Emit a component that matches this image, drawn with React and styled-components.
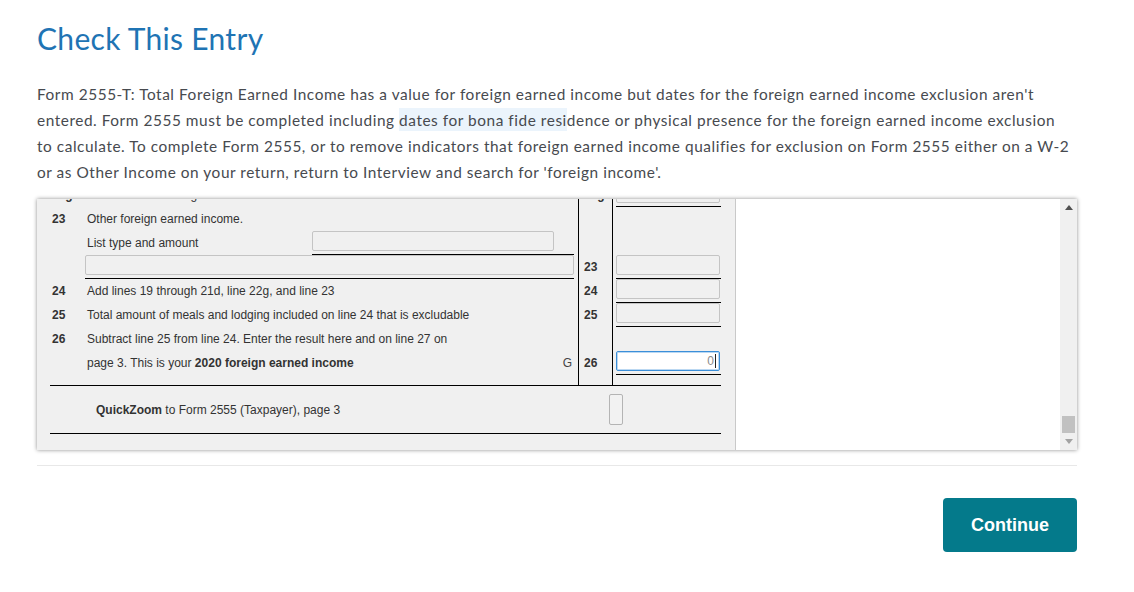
import React from "react";
import styled, { createGlobalStyle } from "styled-components";

const GlobalStyle = createGlobalStyle`
    body {
        margin: 0;
        background: #ffffff;
    }
`;

const Page = styled.div`
    width: 1040px;
    padding: 18px 0 0 37px;
    font-family: Lato, "Open Sans", sans-serif;
`;

const Title = styled.h1`
    margin: 0;
    font-size: 30px;
    line-height: 40px;
    font-weight: 400;
    letter-spacing: 0.3px;
    color: #1f74b4;
`;

const Intro = styled.p`
    margin: 23px 0 0 0;
    font-size: 15.4px;
    line-height: 26px;
    letter-spacing: 0.55px;
    color: #474a4f;
    white-space: nowrap;
`;

const Highlight = styled.span`
    background: #ebf4fc;
    padding: 3px 0 2px;
`;

const Frame = styled.div`
    margin-top: 14px;
    height: 251px;
    display: flex;
    box-shadow: 0 0 4px rgba(0, 0, 0, 0.45);
    overflow: hidden;
`;

const FormPane = styled.div`
    width: 698px;
    background: #f0f0f0;
    border-right: 1px solid #c9c9c9;
    overflow: hidden;
    font-family: "Liberation Sans", Arial, sans-serif;
    font-size: 12px;
    color: #333333;
`;

/* the pane is scrolled down a little: the previous line peeks out at the top */
const Sheet = styled.div`
    margin-top: -16px;
`;

const Grid = styled.div`
    display: grid;
    grid-template-columns: 541px 35px 122px;
    grid-auto-rows: 24px;
`;

const LeftCell = styled.div`
    display: flex;
    align-items: ${({ $top }) => ($top ? "flex-start" : "center")};
    padding-left: 15px;
    padding-right: 4px;
`;

const LineNo = styled.b`
    width: 35px;
    flex: none;
`;

const Label = styled.span`
    flex: 1;
    b {
        font-weight: 700;
    }
`;

const Letter = styled.span`
    margin-right: 2px;
    color: #444;
`;

const MidCell = styled.div`
    border-left: 1px solid #000;
    border-right: 1px solid #000;
    display: flex;
    align-items: center;
    padding-left: 5px;
    font-weight: 700;
`;

const RightCell = styled.div`
    padding-left: 3px;
`;

const Field = styled.div`
    width: ${({ $w }) => $w}px;
    margin-left: ${({ $ml }) => $ml || 0}px;
    height: 23px;
    border-bottom: 1px solid #000;
    box-sizing: content-box;
    flex: none;
`;

const Box = styled.div`
    width: ${({ $w }) => $w}px;
    height: 20px;
    box-sizing: border-box;
    border: 1px solid ${({ $active }) => ($active ? "#3b8fd9" : "#c4c4c4")};
    box-shadow: ${({ $active }) =>
        $active ? "inset 0 0 0 1px rgba(59, 143, 217, 0.35)" : "none"};
    border-radius: 2px;
    background: ${({ $active }) => ($active ? "#ffffff" : "#f0f0f0")};
    display: flex;
    align-items: center;
    justify-content: flex-end;
    padding-right: 3px;
    color: #8a8a8a;
    font-size: 12px;
`;

const Caret = styled.span`
    width: 1px;
    height: 14px;
    background: #222;
    margin-left: 1px;
`;

const Filler = styled.div`
    height: 10px;
    display: grid;
    grid-template-columns: 541px 35px 122px;
`;

const QuickRow = styled.div`
    margin-left: 13px;
    height: 47px;
    border-top: 1px solid #000;
    border-bottom: 1px solid #000;
    display: flex;
    align-items: center;
    padding: 0 98px 0 46px;
    box-sizing: content-box;
    width: 527px;
`;

const QuickText = styled.span`
    flex: 1;
`;

const QuickButton = styled.div`
    width: 14px;
    height: 31px;
    box-sizing: border-box;
    border: 1px solid #b4b4b4;
    border-radius: 2px;
    background: #f2f2f2;
`;

const WhitePane = styled.div`
    flex: 1;
    background: #ffffff;
`;

const Scrollbar = styled.div`
    width: 17px;
    background: #f0f0f0;
    display: flex;
    flex-direction: column;
    align-items: center;
`;

const Arrow = styled.div`
    height: 17px;
    display: flex;
    align-items: center;
    justify-content: center;
`;

const Track = styled.div`
    flex: 1;
    display: flex;
    flex-direction: column;
    justify-content: flex-end;
`;

const Thumb = styled.div`
    width: 13px;
    height: 17px;
    background: #c1c1c1;
`;

const Divider = styled.div`
    margin-top: 15px;
    height: 1px;
    background: #e8e8e8;
`;

const Footer = styled.div`
    display: flex;
    justify-content: flex-end;
    margin-top: 32px;
`;

const ContinueButton = styled.button`
    width: 134px;
    height: 54px;
    border: none;
    border-radius: 4px;
    background: #047a8b;
    color: #ffffff;
    font-family: "Liberation Sans", Arial, sans-serif;
    font-size: 18px;
    font-weight: 700;
    cursor: pointer;
`;

const Row = ({ no, label, mid, right, field, letter }) => (
    <>
        <LeftCell>
            <LineNo>{no}</LineNo>
            {field || <Label>{label}</Label>}
            {letter && <Letter>{letter}</Letter>}
        </LeftCell>
        <MidCell>{mid}</MidCell>
        <RightCell>{right}</RightCell>
    </>
);

const Amount = ({ active }) => (
    <Field $w={105}>
        <Box $w={104} $active={active}>
            {active && (
                <>
                    0<Caret />
                </>
            )}
        </Box>
    </Field>
);

const App = () => (
    <>
        <GlobalStyle />
        <Page>
            <Title>Check This Entry</Title>
            <Intro>
                Form 2555-T: Total Foreign Earned Income has a value for
                foreign earned income but dates for the foreign earned income
                exclusion aren't
                <br />
                entered. Form 2555 must be completed including{" "}
                <Highlight>dates for bona fide resi</Highlight>dence or physical
                presence for the foreign earned income exclusion
                <br />
                to calculate. To complete Form 2555, or to remove indicators
                that foreign earned income qualifies for exclusion on Form 2555
                either on a W-2
                <br />
                or as Other Income on your return, return to Interview and
                search for 'foreign income'.
            </Intro>

            <Frame>
                <FormPane>
                    <Sheet>
                        <Grid>
                            <Row
                                no="22g"
                                label="Add lines 22a through 22f"
                                mid="22g"
                                right={<Amount />}
                            />
                            <Row no="23" label="Other foreign earned income." />
                            <Row
                                field={
                                    <>
                                        <Label>List type and amount</Label>
                                        <Field $w={262}>
                                            <Box $w={242} />
                                        </Field>
                                    </>
                                }
                            />
                            <LeftCell $top>
                                <Field $w={489} $ml={33}>
                                    <Box $w={489} />
                                </Field>
                            </LeftCell>
                            <MidCell>23</MidCell>
                            <RightCell>
                                <Amount />
                            </RightCell>
                            <Row
                                no="24"
                                label="Add lines 19 through 21d, line 22g, and line 23"
                                mid="24"
                                right={<Amount />}
                            />
                            <Row
                                no="25"
                                label="Total amount of meals and lodging included on line 24 that is excludable"
                                mid="25"
                                right={<Amount />}
                            />
                            <Row
                                no="26"
                                label="Subtract line 25 from line 24. Enter the result here and on line 27 on"
                            />
                            <Row
                                label={
                                    <>
                                        page 3. This is your{" "}
                                        <b>2020 foreign earned income</b>
                                    </>
                                }
                                letter="G"
                                mid="26"
                                right={<Amount active />}
                            />
                        </Grid>
                        <Filler>
                            <div />
                            <MidCell />
                            <div />
                        </Filler>
                        <QuickRow>
                            <QuickText>
                                <b>QuickZoom</b> to Form 2555 (Taxpayer), page 3
                            </QuickText>
                            <QuickButton />
                        </QuickRow>
                    </Sheet>
                </FormPane>
                <WhitePane />
                <Scrollbar>
                    <Arrow>
                        <svg width="8" height="5" viewBox="0 0 8 5">
                            <path d="M0 5 L4 0 L8 5 Z" fill="#505050" />
                        </svg>
                    </Arrow>
                    <Track>
                        <Thumb />
                    </Track>
                    <Arrow>
                        <svg width="8" height="5" viewBox="0 0 8 5">
                            <path d="M0 0 L8 0 L4 5 Z" fill="#a3a3a3" />
                        </svg>
                    </Arrow>
                </Scrollbar>
            </Frame>

            <Divider />
            <Footer>
                <ContinueButton>Continue</ContinueButton>
            </Footer>
        </Page>
    </>
);

export default App;
